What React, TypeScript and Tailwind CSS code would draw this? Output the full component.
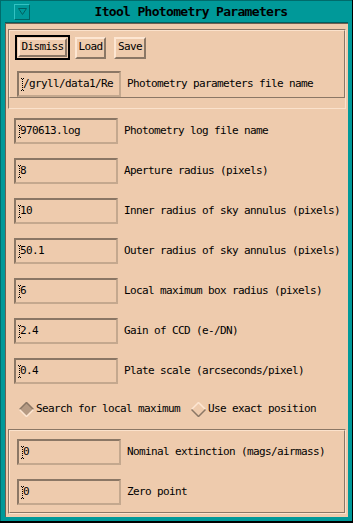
import React from 'react';

const mono = "font-['DejaVu_Sans_Mono','Liberation_Mono',monospace] text-[11px] tracking-[-0.62px] text-black";

// stippled i-beam cursor that Tk draws over the first character
function Caret() {
  const dots: [number, number][] = [
    [0, 0], [2, 0], [1, 1],
    [1, 3], [1, 5], [1, 7], [1, 9],
    [1, 11], [0, 12], [2, 12],
  ];
  return (
    <svg width="3" height="13" className="absolute left-[2px] top-[5px]">
      {dots.map(([x, y]) => (
        <rect key={`${x}-${y}`} x={x} y={y} width="1" height="1" fill="#000" />
      ))}
    </svg>
  );
}

function Field({ value }: { value: string }) {
  return (
    <div className="relative w-[104px] h-[26px] shrink-0 border-2 border-t-[#8b7765] border-l-[#8b7765] border-b-[#c4a88e] border-r-[#c4a88e] flex items-center pl-[4px]">
      <Caret />
      <span className={mono}>{value}</span>
    </div>
  );
}

function Row({ value, label }: { value: string; label: string }) {
  return (
    <div className="flex items-center gap-[6px] ml-[8px]">
      <Field value={value} />
      <span className={mono}>{label}</span>
    </div>
  );
}

function Group({ children, className }: { children: React.ReactNode; className?: string }) {
  return (
    <div className={`border border-t-[#8b7765] border-l-[#8b7765] border-b-[#fbe2cc] border-r-[#fbe2cc] ${className ?? ''}`}>
      <div className="border border-t-[#fbe2cc] border-l-[#fbe2cc] border-b-[#8b7765] border-r-[#8b7765]">
        {children}
      </div>
    </div>
  );
}

const raised =
  'border-2 border-t-[#fde6d2] border-l-[#fde6d2] border-b-[#8b7765] border-r-[#8b7765] bg-[#eecbad] flex items-center justify-center';

function Diamond({ on }: { on: boolean }) {
  return (
    <svg width="15" height="15" viewBox="0 0 15 15" className="shrink-0">
      <polygon points="7.5,0.5 14.5,7.5 7.5,14.5 0.5,7.5" fill={on ? '#b59a83' : '#eecbad'} />
      <polyline points="0.5,7.5 7.5,0.5 14.5,7.5" fill="none" stroke={on ? '#8b7765' : '#fde6d2'} strokeWidth="1.5" />
      <polyline points="0.5,7.5 7.5,14.5 14.5,7.5" fill="none" stroke={on ? '#fde6d2' : '#8b7765'} strokeWidth="1.5" />
    </svg>
  );
}

export default function App() {
  return (
    <div className="w-[353px] h-[523px] bg-black pr-[1px] pb-[2px]">
      <div className="w-full h-full bg-[#009999] border-l border-t border-[#006b6b] flex flex-col px-[4px]">
        {/* Title bar */}
        <div className="h-[22px] shrink-0 flex items-center border-b border-[#005e5e]">
          <div className="ml-[9px] w-[16px] h-[16px] border border-t-[#33c2c2] border-l-[#33c2c2] border-b-[#006464] border-r-[#006464] flex items-center justify-center">
            <svg width="9" height="7" viewBox="0 0 9 7">
              <polygon points="0.5,0.5 8.5,0.5 4.5,6.5" fill="none" stroke="#006060" strokeWidth="1" />
            </svg>
          </div>
          <div className="flex-1 text-center font-['DejaVu_Sans_Mono',monospace] font-bold text-[13px] tracking-[-0.68px] text-black pl-[4px]">
            Itool Photometry Parameters
          </div>
        </div>

        {/* Body */}
        <div className="flex-1 bg-[#eecbad] border-l border-t border-[#6f5e50] flex flex-col pt-[5px] px-[2px] mb-[4px]">
          <Group className="h-[80px]">
            <div className="pt-[4px] pl-[5px] flex items-center">
              <div className="border-2 border-black p-[1px]">
                <div className={`${raised} w-[49px] h-[19px]`}>
                  <span className={mono}>Dismiss</span>
                </div>
              </div>
              <div className={`${raised} ml-[5px] w-[31px] h-[22px]`}>
                <span className={mono}>Load</span>
              </div>
              <div className={`${raised} ml-[8px] w-[32px] h-[22px]`}>
                <span className={mono}>Save</span>
              </div>
            </div>
            <div className="mt-[11px] flex items-center gap-[6px] ml-[7px]">
              <Field value="/gryll/data1/Re" />
              <span className={mono}>Photometry parameters file name</span>
            </div>
          </Group>

          <div className="mt-[9px] flex flex-col gap-[14px] -ml-[2px]">
            <Row value="970613.log" label="Photometry log file name" />
            <Row value="8" label="Aperture radius (pixels)" />
            <Row value="10" label="Inner radius of sky annulus (pixels)" />
            <Row value="50.1" label="Outer radius of sky annulus (pixels)" />
            <Row value="6" label="Local maximum box radius (pixels)" />
            <Row value="2.4" label="Gain of CCD (e-/DN)" />
            <Row value="0.4" label="Plate scale (arcseconds/pixel)" />
          </div>

          <div className="mt-[18px] ml-[11px] flex items-center h-[15px]">
            <Diamond on />
            <span className={`${mono} ml-[2px]`}>Search for local maximum</span>
            <div className="ml-[11px]">
              <Diamond on={false} />
            </div>
            <span className={`${mono} ml-[2px]`}>Use exact position</span>
          </div>

          <Group className="mt-[12px]">
            <div className="flex flex-col gap-[14px] pt-[8px] pb-[7px]">
              <div className="flex items-center gap-[6px] ml-[7px]">
                <Field value="0" />
                <span className={mono}>Nominal extinction (mags/airmass)</span>
              </div>
              <div className="flex items-center gap-[6px] ml-[7px]">
                <Field value="0" />
                <span className={mono}>Zero point</span>
              </div>
            </div>
          </Group>
        </div>
      </div>
    </div>
  );
}
